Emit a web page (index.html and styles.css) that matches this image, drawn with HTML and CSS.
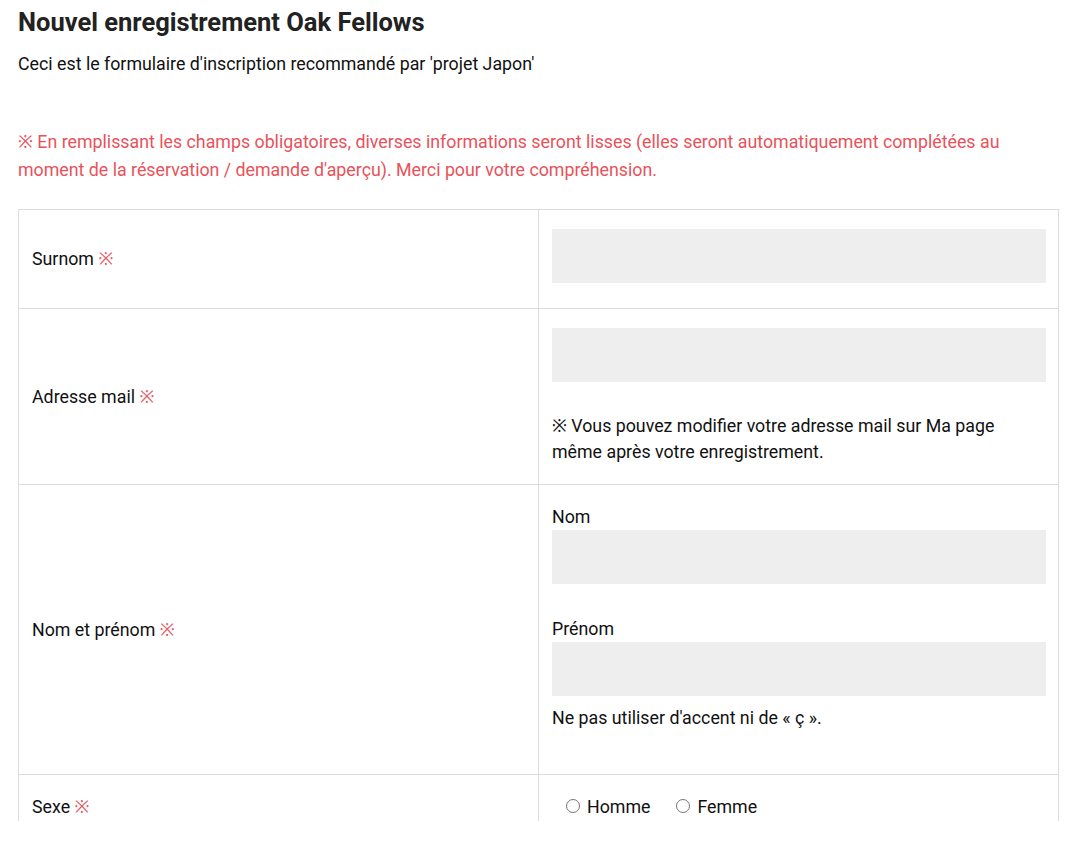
FILE: index.html
```html
<!DOCTYPE html>
<html lang="fr">
<head>
    <meta charset="UTF-8">
    <meta name="viewport" content="width=device-width, initial-scale=1.0">
    <title>Nouvel enregistrement Oak Fellows</title>
    <link rel="stylesheet" href="styles.css">
</head>
<body>
    <div class="page">
        <h1>Nouvel enregistrement Oak Fellows</h1>
        <p class="lead">Ceci est le formulaire d'inscription recommandé par 'projet Japon'</p>

        <p class="notice">※ En remplissant les champs obligatoires, diverses informations seront lisses (elles seront automatiquement complétées au moment de la réservation / demande d'aperçu). Merci pour votre compréhension.</p>

        <form action="#">
            <table class="form-table">
                <tbody>
                    <tr>
                        <th><label for="nickname">Surnom</label> <span class="req">※</span></th>
                        <td>
                            <input type="text" id="nickname" name="nickname">
                        </td>
                    </tr>
                    <tr>
                        <th><label for="email">Adresse mail</label> <span class="req">※</span></th>
                        <td>
                            <input type="email" id="email" name="email">
                            <p class="hint">※ Vous pouvez modifier votre adresse mail sur Ma page même après votre enregistrement.</p>
                        </td>
                    </tr>
                    <tr>
                        <th>Nom et prénom <span class="req">※</span></th>
                        <td>
                            <div class="field">
                                <label for="last-name">Nom</label>
                                <input type="text" id="last-name" name="last-name">
                            </div>
                            <div class="field">
                                <label for="first-name">Prénom</label>
                                <input type="text" id="first-name" name="first-name">
                            </div>
                            <p class="hint hint-last">Ne pas utiliser d'accent ni de « ç ».</p>
                        </td>
                    </tr>
                    <tr>
                        <th>Sexe <span class="req">※</span></th>
                        <td>
                            <div class="radios">
                                <label><input type="radio" name="sex" value="homme"> Homme</label>
                                <label><input type="radio" name="sex" value="femme"> Femme</label>
                            </div>
                        </td>
                    </tr>
                </tbody>
            </table>
        </form>
    </div>
</body>
</html>
```

FILE: styles.css
```css
body {
    font-family: Roboto, "Noto Sans", Arial, sans-serif;
    color: #111;
    background: #fff;
    margin: 0;
}

/* la page est coupée en bas, comme dans la fenêtre d'origine */
.page {
    height: 821px;
    overflow: hidden;
    padding: 0 21px 0 18px;
}

h1 {
    margin: 0;
    padding-top: 6px;
    font-size: 25.5px;
    line-height: 32px;
    font-weight: 700;
    color: #222;
}

.lead {
    margin: 14px 0 0;
    font-size: 17.8px;
    line-height: 24px;
}

.notice {
    margin: 52px 0 0;
    color: #e8525a;
    font-size: 17.8px;
    line-height: 28px;
}

.form-table {
    width: 100%;
    margin-top: 25px;
    border-collapse: collapse;
    font-size: 17.8px;
    line-height: 26px;
}

.form-table th,
.form-table td {
    border: 1px solid #dcdcdc;
    vertical-align: middle;
    text-align: left;
}

.form-table th {
    width: 50%;
    font-weight: 400;
    padding: 19px 13px;
}

.form-table td {
    padding: 19px 12px 19px 13px;
}

.req {
    color: #e06068;
}

.form-table td label {
    display: block;
}

input[type="text"], input[type="email"] {
    display: block;
    width: 100%;
    height: 54px;
    margin: 0 0 6px;
    border: none;
    border-radius: 0;
    background: #eeeeee;
    box-sizing: border-box;
    font: inherit;
    padding: 0 12px;
}

.field + .field {
    margin-top: 32px;
}

.hint {
    margin: 31px 0 0;
}

.hint-last {
    margin: 9px 0 24px;
}

.radios {
    display: flex;
    gap: 21px;
    padding-left: 9px;
}

.form-table .radios label {
    display: flex;
    align-items: center;
}

.radios input {
    margin: 0 7px 2px 5px;
    width: 14px;
    height: 14px;
}
```
